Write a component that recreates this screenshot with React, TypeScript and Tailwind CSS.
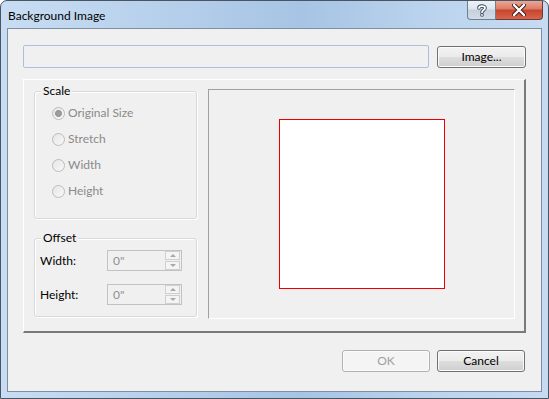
import React from 'react';

const font = "font-['Lato','Segoe_UI',sans-serif]";

const Radio = ({ label, checked }: { label: string; checked?: boolean }) => (
  <div className="flex items-center h-[16px]">
    <span className="w-[13px] h-[13px] rounded-full border border-[#bcbcbc] bg-gradient-to-br from-[#e6e6e6] to-[#f8f8f8] flex items-center justify-center">
      {checked && <span className="w-[7px] h-[7px] rounded-full bg-[#9d9d9d] border border-[#8a8a8a]" />}
    </span>
    <span className="ml-[3px] text-[12px] text-[#8a8a8a]">{label}</span>
  </div>
);

const Spin = ({ label }: { label: string }) => (
  <div className="flex items-center h-[21px]">
    <span className="w-[67px] text-[12px] text-black">{label}</span>
    <div className="w-[75px] h-[21px] border border-[#c2c2c2] bg-[#f0f0f0] flex items-center justify-between">
      <span className="pl-[5px] text-[12px] text-[#8f8f8f]">0"</span>
      <div className="flex flex-col gap-[1px] mr-[1px]">
        <span className="w-[15px] h-[9px] border border-[#cfcfcf] bg-[#f4f4f4] flex items-center justify-center">
          <span className="w-0 h-0 border-l-[3px] border-r-[3px] border-b-[3px] border-l-transparent border-r-transparent border-b-[#a8a8a8]" />
        </span>
        <span className="w-[15px] h-[9px] border border-[#cfcfcf] bg-[#f4f4f4] flex items-center justify-center">
          <span className="w-0 h-0 border-l-[3px] border-r-[3px] border-t-[3px] border-l-transparent border-r-transparent border-t-[#a8a8a8]" />
        </span>
      </div>
    </div>
  </div>
);

const Group = ({ title, className, children }: { title: string; className: string; children: React.ReactNode }) => (
  <div className={`relative w-[163px] border border-[#d5dade] rounded-[3px] shadow-[inset_1px_1px_0_#ffffff,1px_1px_0_#ffffff] ${className}`}>
    <span className="absolute left-[6px] top-[-9px] px-[2px] bg-[#f0f0f0] text-[12px] leading-[16px] text-black">{title}</span>
    {children}
  </div>
);

const Button = ({ label, disabled, className = '' }: { label: string; disabled?: boolean; className?: string }) => (
  <div
    className={`h-[22px] rounded-[3px] border flex items-center justify-center text-[12px] shadow-[inset_0_0_0_1px_#fbfbfb] ${
      disabled
        ? 'border-[#adb2b5] bg-[#f4f4f4] text-[#a0a0a0]'
        : 'border-[#707070] bg-[linear-gradient(#f2f2f2_0%,#ebebeb_50%,#dddddd_51%,#cfcfcf_100%)] text-black'
    } ${className}`}
  >
    {label}
  </div>
);

export default function App() {
  return (
    <div className={`${font} w-[549px] h-[399px] flex flex-col rounded-t-[7px] border border-[#4a5563] bg-[linear-gradient(90deg,#c8ddf3_0%,#b3cdea_35%,#a7c4e4_55%,#bcd4ee_80%,#c6dbf2_100%)]`}>
      <div className="h-[27px] flex items-start justify-between">
        <span className="ml-[7px] mt-[7px] text-[12px] text-black leading-[16px]">Background Image</span>
        <div className="flex mr-[5px]">
          <div className="w-[29px] h-[19px] rounded-bl-[4px] border border-t-0 border-[#6f7f92] bg-[linear-gradient(#eef2f6_0%,#dde5ee_45%,#c4d0dd_50%,#d2dce7_100%)] flex items-center justify-center">
            <svg width="10" height="13" viewBox="0 0 10 13">
              <path d="M2 4 C2 1.5 8 1.5 8 4 C8 6 5 6 5 8.2" fill="none" stroke="#36465a" strokeWidth="3.6" strokeLinecap="round" />
              <circle cx="5" cy="11" r="1.8" fill="#36465a" />
              <path d="M2 4 C2 1.5 8 1.5 8 4 C8 6 5 6 5 8.2" fill="none" stroke="#ffffff" strokeWidth="1.8" strokeLinecap="round" />
              <circle cx="5" cy="11" r="0.9" fill="#ffffff" />
            </svg>
          </div>
          <div className="w-[47px] h-[19px] rounded-br-[4px] border border-l-0 border-t-0 border-[#6b3a30] bg-[linear-gradient(#e9a898_0%,#dc7a65_45%,#c7432c_50%,#d6654d_100%)] flex items-center justify-center">
            <svg width="14" height="12" viewBox="0 0 14 12">
              <path d="M2 1 L12 11 M12 1 L2 11" stroke="#3a1b14" strokeWidth="4.2" strokeLinecap="round" />
              <path d="M2 1 L12 11 M12 1 L2 11" stroke="#ffffff" strokeWidth="2.4" strokeLinecap="round" />
            </svg>
          </div>
        </div>
      </div>
      <div className="ml-[6px] w-[535px] h-[364px] border border-[#7d8da2] bg-[#f0f0f0] flex flex-col">
        <div className="mt-[16px] ml-[15px] flex items-start">
          <div className="w-[406px] h-[23px] rounded-[2px] border border-[#a9c1de] bg-[#f0f0f0]" />
          <Button label="Image..." className="ml-[8px] mt-[1px] w-[89px]" />
        </div>
        <div className="mt-[11px] ml-[15px] w-[503px] h-[254px] border-t border-l border-t-white border-l-white border-r-2 border-b-2 border-r-[#7a7a7a] border-b-[#7a7a7a] flex">
          <div className="ml-[10px] flex flex-col">
            <Group title="Scale" className="mt-[11px] h-[128px]">
              <div className="pt-[13px] pl-[17px] flex flex-col gap-[10px]">
                <Radio label="Original Size" checked />
                <Radio label="Stretch" />
                <Radio label="Width" />
                <Radio label="Height" />
              </div>
            </Group>
            <Group title="Offset" className="mt-[19px] h-[79px]">
              <div className="pt-[11px] pl-[5px] flex flex-col gap-[13px]">
                <Spin label="Width:" />
                <Spin label="Height:" />
              </div>
            </Group>
          </div>
          <div className="ml-[11px] mt-[9px] w-[307px] h-[230px] border border-t-[#a0a0a0] border-l-[#a0a0a0] border-r-white border-b-white flex items-center justify-center">
            <div className="w-[166px] h-[170px] bg-white border border-[#ee0000]" />
          </div>
        </div>
        <div className="mt-[17px] mr-[16px] flex justify-end gap-[7px]">
          <Button label="OK" disabled className="w-[88px]" />
          <Button label="Cancel" className="w-[88px]" />
        </div>
      </div>
    </div>
  );
}
